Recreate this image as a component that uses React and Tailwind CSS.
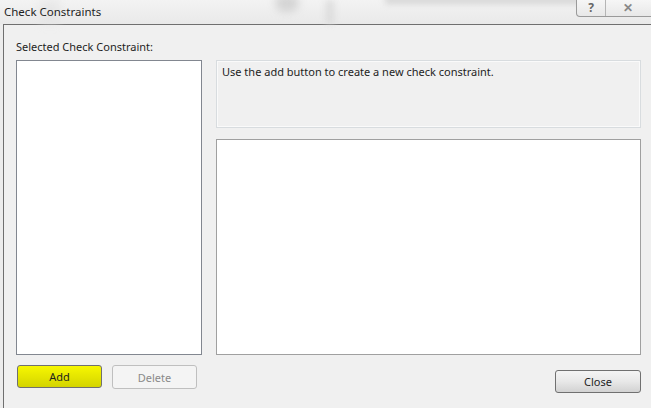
export default function App() {
  const font = { fontFamily: '"Noto Sans", "Open Sans", sans-serif' };
  return (
    <div className="w-[651px] h-[408px] bg-[#ececec] flex flex-col overflow-hidden text-[11px] text-black" style={font}>
      {/* title bar */}
      <div className="relative h-[24px] shrink-0 bg-gradient-to-b from-[#f3f3f3] to-[#e9e9e9] flex items-center">
        <div className="absolute left-[275px] top-[-6px] w-[24px] h-[18px] rounded-full bg-[#c8c8c8] blur-[4px] opacity-70" />
        <div className="absolute left-[325px] top-0 w-[10px] h-[24px] bg-[#d9d9d9] blur-[3px] opacity-70" />
        <div className="absolute left-[40px] top-0 w-[20px] h-[24px] bg-[#e2e2e2] blur-[4px] opacity-60" />
        <div className="absolute left-[385px] top-[-4px] w-[205px] h-[8px] bg-[#c9c9c9] blur-[3px] opacity-70" />
        <span className="relative pl-[4px] text-[11.5px] text-[#1e1e1e] leading-none -mt-[1px]">Check Constraints</span>
        <div className="absolute right-[-4px] top-0 flex h-[17px] border border-t-0 border-[#9a9a9a] rounded-b-[4px] bg-gradient-to-b from-[#f6f6f6] to-[#e8e8e8]">
          <div className="w-[29px] flex items-center justify-center border-r border-[#b5b5b5] text-[#666] text-[12px] font-bold leading-[14px]">?</div>
          <div className="w-[48px] flex items-center justify-center text-[#888] text-[12px] font-bold leading-[14px] pr-[4px]">✕</div>
        </div>
      </div>
      {/* dialog body */}
      <div className="flex-1 ml-[3px] border-t border-l border-[#6f6f6f] bg-[#f0f0f0] flex flex-col pl-[12px] pr-[10px]">
        <div className="h-[35px] flex items-end pb-[6px] text-[#1e1e1e] leading-[14px]">Selected Check Constraint:</div>
        <div className="flex gap-[14px] h-[295px]">
          <div className="w-[186px] bg-white border border-[#828790]" />
          <div className="flex-1 flex flex-col gap-[11px]">
            <div className="h-[68px] bg-[#f0f0f0] border border-[#d8dcdf] shadow-[inset_0_0_0_1px_#fafafa] px-[5px] pt-[4px] text-[#1e1e1e] leading-[14px]">
              Use the add button to create a new check constraint.
            </div>
            <div className="flex-1 bg-white border border-[#a0a0a0]" />
          </div>
        </div>
        <div className="flex items-start pt-[10px]">
          <button className="ml-[1px] w-[85px] h-[23px] rounded-[3px] border border-[#707070] bg-gradient-to-b from-[#f7f700] to-[#d4d400] text-[11px] text-[#1e1e1e] leading-none">Add</button>
          <button className="ml-[10px] w-[85px] h-[24px] rounded-[3px] border border-[#bfbfbf] bg-[#f4f4f4] text-[11px] text-[#8a8a8a] leading-none">Delete</button>
          <button className="ml-auto mt-[5px] mr-0 w-[86px] h-[23px] rounded-[3px] border border-[#707070] bg-gradient-to-b from-[#f4f4f4] via-[#e8e8e8] to-[#d2d2d2] text-[11px] text-[#1e1e1e] leading-none">Close</button>
        </div>
      </div>
    </div>
  );
}
